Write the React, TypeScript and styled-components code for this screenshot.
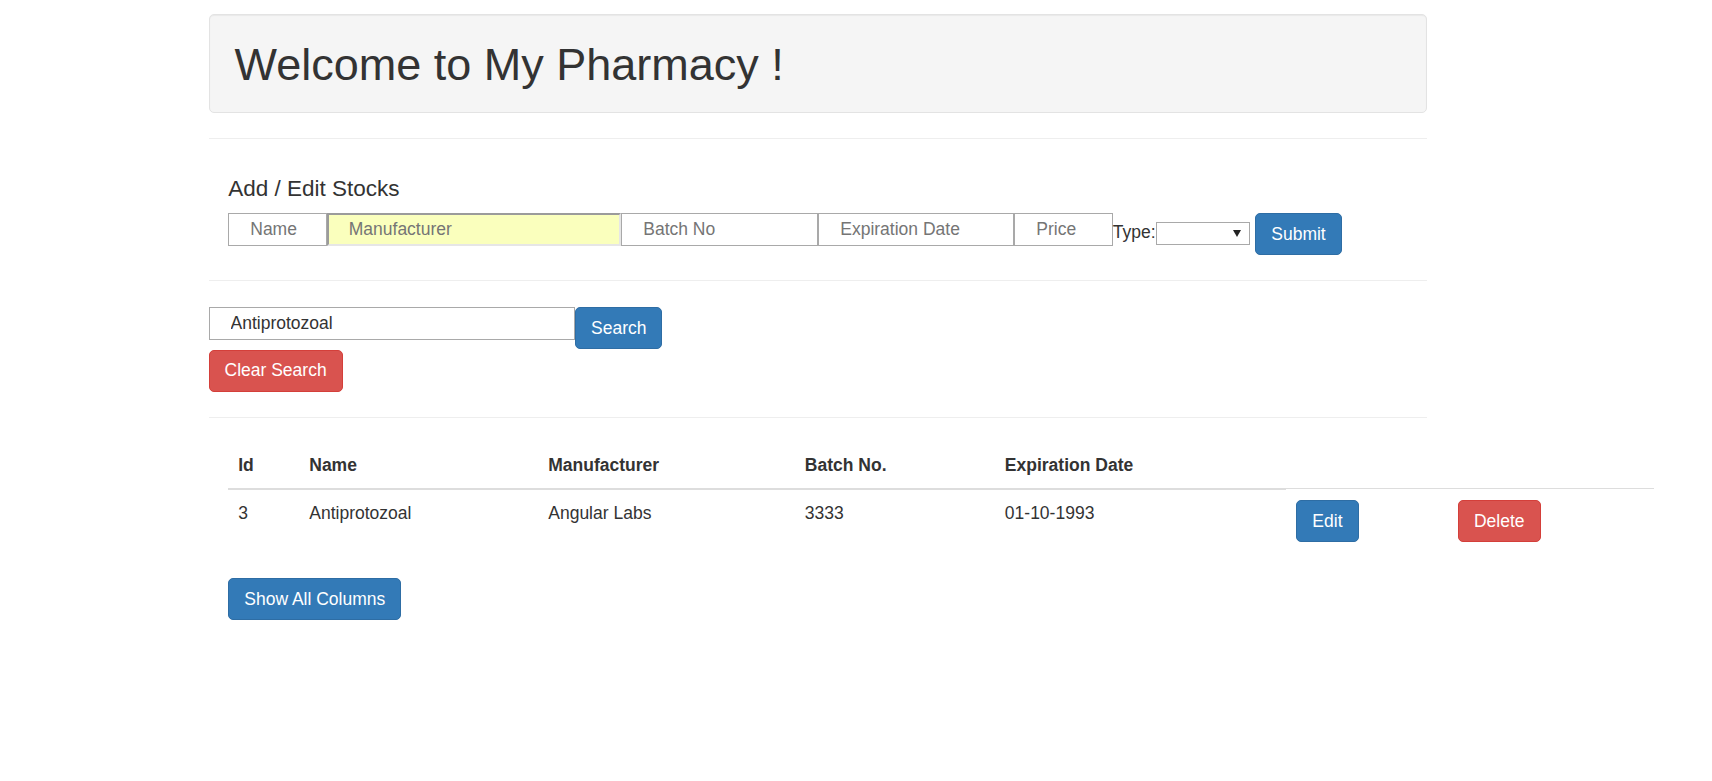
import React from "react";
import styled, { createGlobalStyle, css } from "styled-components";

const GlobalStyle = createGlobalStyle`
  html, body { margin: 0; padding: 0; background: #fff; }
  body {
    font-family: "Liberation Sans", Arial, Helvetica, sans-serif;
    font-size: 17.5px;
    line-height: 25px;
    color: #333;
  }
  *, *::before, *::after { box-sizing: border-box; }
`;

const Page = styled.div`
  width: 1218.5px;
  margin-left: 208.5px;
  padding-top: 14px;
`;

const Well = styled.div`
  background: #f5f5f5;
  border: 1px solid #e3e3e3;
  border-radius: 5px;
  box-shadow: inset 0 1px 1px rgba(0, 0, 0, 0.05);
  padding: 24.5px 24.5px 23px 25px;
`;

const Title = styled.h1`
  margin: 0;
  font-size: 45px;
  line-height: 49.5px;
  font-weight: 500;
`;

const Divider = styled.hr`
  margin: 25px 0;
  height: 0;
  border: 0;
  border-top: 1px solid #eee;
`;

const FormSection = styled.section`
  padding: 13px 18.75px 0 19.75px;
`;

const SectionTitle = styled.h4`
  margin: 0 0 11.5px;
  font-size: 22.5px;
  line-height: 24.75px;
  font-weight: 500;
`;

const FormRow = styled.div`
  display: flex;
  align-items: flex-start;
`;

const TextInput = styled.input<{ $w: number; $autofill?: boolean }>`
  width: ${(p) => p.$w}px;
  height: 33px;
  margin: 0;
  padding: 0 0 0 21px;
  font: inherit;
  color: #333;
  background: #fff;
  border: 1px solid #a9a9a9;
  border-radius: 0;
  outline: none;
  &::placeholder {
    color: #757575;
    opacity: 1;
  }
  ${(p) =>
    p.$autofill &&
    css`
      background: #faffbd;
      padding-left: 20px;
      border-width: 2px;
      border-top-color: #9b9b9b;
      border-left-color: #9b9b9b;
      border-bottom-color: #e6e6e6;
      border-right-color: #e6e6e6;
    `}
`;

const TypeLabel = styled.label`
  margin-top: 7px;
  line-height: 25px;
`;

const SelectWrap = styled.span`
  position: relative;
  display: block;
  width: 94px;
  height: 22.6px;
  margin-top: 8.7px;
  &::after {
    content: "";
    position: absolute;
    right: 9px;
    top: 8px;
    border-left: 4px solid transparent;
    border-right: 4px solid transparent;
    border-top: 7px solid #222;
    pointer-events: none;
  }
`;

const Select = styled.select`
  appearance: none;
  -webkit-appearance: none;
  display: block;
  width: 100%;
  height: 100%;
  margin: 0;
  padding: 0 4px;
  font: inherit;
  font-size: 15px;
  background: #fff;
  border: 1px solid #a9a9a9;
  border-radius: 0;
  outline: none;
`;

const Button = styled.button<{ $variant: "primary" | "danger"; $ml?: number }>`
  display: inline-block;
  margin: 0 0 0 ${(p) => p.$ml ?? 0}px;
  padding: 7.5px 15px;
  font: inherit;
  font-size: 17.5px;
  line-height: 25px;
  color: #fff;
  border: 1.25px solid;
  border-radius: 5px;
  cursor: pointer;
  white-space: nowrap;
  ${(p) =>
    p.$variant === "primary"
      ? css`
          background: #337ab7;
          border-color: #2e6da4;
        `
      : css`
          background: #d9534f;
          border-color: #d43f3a;
        `}
`;

const SearchSection = styled.section`
  display: flex;
  flex-direction: column;
  align-items: flex-start;
  gap: 0.4px;
  padding-top: 1px;
`;

const SearchRow = styled.div`
  display: flex;
  align-items: flex-start;
`;

const SearchInput = styled.input`
  width: 366.5px;
  height: 32.5px;
  margin: 0;
  padding: 0 0 0 21px;
  font: inherit;
  color: #333;
  background: #fff;
  border: 1px solid #a9a9a9;
  border-radius: 0;
  outline: none;
`;

const TableSection = styled.section`
  padding: 0 18.75px 0 19.75px;
`;

const Table = styled.table`
  width: 1426px;
  table-layout: fixed;
  border-collapse: collapse;
  border-spacing: 0;
  margin-bottom: 26px;
`;

const Th = styled.th`
  padding: 10px;
  text-align: left;
  font-weight: bold;
  line-height: 25px;
  vertical-align: bottom;
  border-bottom: 2px solid #ddd;
`;

const Td = styled.td`
  padding: 11px 10px 10px;
  line-height: 25px;
  vertical-align: top;
  border-top: 1px solid #ddd;
`;

const columns = [71, 239, 256.6, 200, 291.5, 161.6, 206.3];

const rows = [
  {
    id: 3,
    name: "Antiprotozoal",
    manufacturer: "Angular Labs",
    batch: "3333",
    expiration: "01-10-1993",
  },
];

export default function App() {
  return (
    <>
      <GlobalStyle />
      <Page>
        <Well>
          <Title>Welcome to My Pharmacy !</Title>
        </Well>
        <Divider />
        <FormSection>
          <SectionTitle>Add / Edit Stocks</SectionTitle>
          <FormRow>
            <TextInput $w={98.5} placeholder="Name" />
            <TextInput $w={294.5} $autofill placeholder="Manufacturer" />
            <TextInput $w={197} placeholder="Batch No" />
            <TextInput $w={196} placeholder="Expiration Date" />
            <TextInput $w={98.6} placeholder="Price" />
            <TypeLabel>Type:</TypeLabel>
            <SelectWrap>
              <Select defaultValue="">
                <option value=""></option>
                <option value="tablet">Tablet</option>
                <option value="syrup">Syrup</option>
              </Select>
            </SelectWrap>
            <Button $variant="primary" $ml={5.6}>
              Submit
            </Button>
          </FormRow>
        </FormSection>
        <Divider />
        <SearchSection>
          <SearchRow>
            <SearchInput defaultValue="Antiprotozoal" />
            <Button $variant="primary">Search</Button>
          </SearchRow>
          <Button $variant="danger">Clear Search</Button>
        </SearchSection>
        <Divider />
        <TableSection>
          <Table>
            <colgroup>
              {columns.map((w, i) => (
                <col key={i} style={{ width: w }} />
              ))}
            </colgroup>
            <thead>
              <tr>
                <Th>Id</Th>
                <Th>Name</Th>
                <Th>Manufacturer</Th>
                <Th>Batch No.</Th>
                <Th>Expiration Date</Th>
              </tr>
            </thead>
            <tbody>
              {rows.map((r) => (
                <tr key={r.id}>
                  <Td>{r.id}</Td>
                  <Td>{r.name}</Td>
                  <Td>{r.manufacturer}</Td>
                  <Td>{r.batch}</Td>
                  <Td>{r.expiration}</Td>
                  <Td>
                    <Button $variant="primary">Edit</Button>
                  </Td>
                  <Td>
                    <Button $variant="danger">Delete</Button>
                  </Td>
                </tr>
              ))}
            </tbody>
          </Table>
          <Button $variant="primary">Show All Columns</Button>
        </TableSection>
      </Page>
    </>
  );
}
